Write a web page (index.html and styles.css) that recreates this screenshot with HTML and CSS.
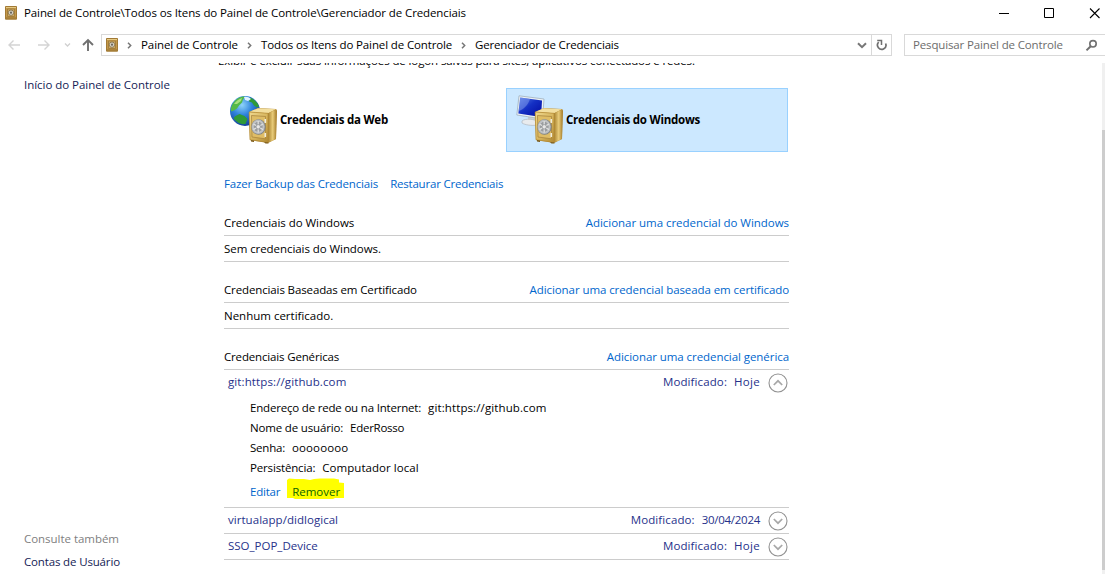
FILE: index.html
```
<!DOCTYPE html>
<html lang="pt-BR">
<head>
<meta charset="utf-8">
<title>Gerenciador de Credenciais</title>
<link rel="stylesheet" href="styles.css">
</head>
<body>
<svg class="defs" width="0" height="0">
  <defs>
    <linearGradient id="gold" x1="0" y1="0" x2="1" y2="1"><stop offset="0" stop-color="#efd88f"/><stop offset=".55" stop-color="#d6b45c"/><stop offset="1" stop-color="#b08a34"/></linearGradient>
    <linearGradient id="goldSide" x1="0" x2="1"><stop offset="0" stop-color="#a8822f"/><stop offset=".55" stop-color="#e9cc7a"/><stop offset="1" stop-color="#a57d2c"/></linearGradient>
    <radialGradient id="sea" cx=".4" cy=".3" r=".75"><stop offset="0" stop-color="#8fd4fa"/><stop offset=".45" stop-color="#2f83dc"/><stop offset="1" stop-color="#123a94"/></radialGradient>
    <radialGradient id="steel"><stop offset="0" stop-color="#f4f4f2"/><stop offset="1" stop-color="#b4b7ba"/></radialGradient>
    <linearGradient id="screen" x1="0" y1="0" x2="1" y2="1"><stop offset="0" stop-color="#5a7fe8"/><stop offset=".45" stop-color="#1430c4"/><stop offset="1" stop-color="#0209a0"/></linearGradient>
    <symbol id="vault" viewBox="0 0 30 37">
      <path d="M1 5 10 1 28 2 29 4 28 32 20 36 2 33Z" fill="#b48c38"/>
      <path d="M1.500 4.800 10 1.300 28 2.300 20 6.300Z" fill="#f3df9f"/>
      <path d="M20 6.200 28.600 2.600 28 32 20.500 35.600Z" fill="url(#goldSide)"/>
      <path d="M1.200 5 20 6.300 20 35.300 2 32.800Z" fill="url(#gold)" stroke="#b48b35" stroke-width=".7"/>
      <path d="M3.500 8.500 17.500 9.500V31.800L4 30Z" fill="#dfbd66" stroke="#a5803a" stroke-width=".7"/>
      <path d="M17.300 12v4M17.300 26v4" stroke="#f0ecdc" stroke-width="1.600"/>
      <ellipse cx="10.500" cy="20" rx="7.200" ry="7.800" fill="#7d8082"/>
      <ellipse cx="10.200" cy="19.800" rx="6.600" ry="7.200" fill="url(#steel)"/>
      <ellipse cx="10.200" cy="19.800" rx="4.500" ry="5.100" fill="#9a9da0"/>
      <path d="M10.200 14v11.600M5.400 17l9.600 5.600M5.400 22.600 15 17" stroke="#dfe0df" stroke-width="1.300"/>
      <circle cx="10.200" cy="19.800" r="2.200" fill="#e8e8e8" stroke="#85888b" stroke-width=".7"/>
      <path d="M3 33v1.500l3 .5v-1.600M16 35l1.500 1.600 3-.2v-1" fill="#785715"/>
    </symbol>
    <symbol id="safe" viewBox="0 0 12 14">
      <path d="M.5.500h11v12.700H.5Z" fill="#c3984a" stroke="#a27a35"/>
      <path d="M1 1h10v1H1Z" fill="#e5c983"/>
      <path d="M2.500 3h7v7.500h-7Z" fill="#ceaa61" stroke="#9b7637" stroke-width=".8"/>
      <circle cx="6" cy="6.700" r="2.700" fill="#d8d3c4" stroke="#806b43" stroke-width=".8"/>
      <circle cx="6" cy="6.700" r="1.100" fill="#68645a"/>
      <path d="M1 12h10" stroke="#94702e"/>
    </symbol>
    <symbol id="expander" viewBox="0 0 20 20">
      <circle cx="10" cy="10" r="9" fill="#fff" stroke="#929292" stroke-width="1.100"/>
      <path d="M5.800 8 10 12.200 14.200 8" fill="none" stroke="#a8a8a8" stroke-width="1.700"/>
    </symbol>
  </defs>
</svg>
<div class="window">
  <header class="titlebar">
    <svg class="safe"><use href="#safe"/></svg>
    <span class="title ls-10">Painel de Controle\Todos os Itens do Painel de Controle\Gerenciador de Credenciais</span>
    <svg class="controls" viewBox="0 0 110 24"><path d="M4 12.500h10" stroke="#000"/><path d="M49.500 7.500h9v9h-9Z" fill="none" stroke="#000"/><path d="m95 7.500 9.500 9.500m0-9.500L95 17" stroke="#000" stroke-width="1.100"/></svg>
  </header>
  <nav class="navbar">
    <svg class="arrows" viewBox="0 0 101 22" fill="none">
      <path d="M20 11H9m4.500-4.500L9 11l4.500 4.500" stroke="#d4d4d4" stroke-width="1.400"/>
      <path d="M38 11h11m-4.500-4.500L49 11l-4.500 4.500" stroke="#d4d4d4" stroke-width="1.400"/>
      <path d="m65 9.500 2.500 2.500L70 9.500" stroke="#d0d0d0" stroke-width="1.300"/>
      <path d="M88 17V6m-5 5 5-5 5 5" stroke="#707070" stroke-width="1.900"/>
    </svg>
    <div class="address">
      <svg class="safe"><use href="#safe"/></svg>
      <svg class="sep" viewBox="0 0 5 7"><path d="m1 .8 2.700 2.700L1 6.200"/></svg>
      <span class="crumb crumb-root ls-8">Painel de Controle</span>
      <svg class="sep" viewBox="0 0 5 7"><path d="m1 .8 2.700 2.700L1 6.200"/></svg>
      <span class="crumb crumb-all ls-13">Todos os Itens do Painel de Controle</span>
      <svg class="sep" viewBox="0 0 5 7"><path d="m1 .8 2.700 2.700L1 6.200"/></svg>
      <span class="crumb ls-16">Gerenciador de Credenciais</span>
      <svg class="drop" viewBox="0 0 10 7"><path d="m1 1.200 4 4 4-4" fill="none" stroke="#777" stroke-width="2"/></svg>
      <div class="refresh"><svg viewBox="0 0 12 12" width="12" height="12"><path d="M2.700 3.200A4.200 4.200 0 1 0 9.600 4.500" fill="none" stroke="#707070" stroke-width="1.700"/><path d="M1.200 1.500H5.500V6" fill="none" stroke="#707070" stroke-width="1.500"/></svg></div>
    </div>
    <div class="search"><span class="ls-14">Pesquisar Painel de Controle</span>
      <svg viewBox="0 0 13 13"><circle cx="8" cy="4.800" r="3.200" fill="none" stroke="#707070" stroke-width="1.600"/><path d="M5.700 7.200 1.500 11.400" stroke="#707070" stroke-width="2"/></svg>
    </div>
  </nav>
  <div class="body">
    <aside class="sidebar">
      <a class="home ls-3">Início do Painel de Controle</a>
      <span class="see-also ls-3">Consulte também</span>
      <a class="ls-15">Contas de Usuário</a>
    </aside>
    <main class="main">
      <p class="intro ls-11">Exibir e excluir suas informações de logon salvas para sites, aplicativos conectados e redes.</p>
      <div class="tiles">
        <div class="tile">
          <svg class="tile-icon" viewBox="0 0 50 50">
            <circle cx="15" cy="16" r="15" fill="url(#sea)"/>
            <path d="M2 10C5 4 10 1.500 15 1.500l-2 3-1 3-3 3-2 3-3 2-3 1C.8 14 1 12 2 10Z" fill="#54b948"/>
            <path d="M20 2.500c4 1.500 7.500 5 9 9l-2 1-3-2-2-3-3-1ZM5.500 21l4-2 5 2 3 3-2 5C10 30 5 26 3.500 23Z" fill="#2f9a38"/>
            <path d="M4 9c2-3 5-5 8-6l-1 3-4 3Z" fill="#a8e07d"/>
            <path d="M14 2c3-.5 5 .500 7 2l-3 2-3-1Z" fill="#dff3ff"/>
            <use href="#vault" x="18" y="12" width="30" height="37"/>
          </svg>
          <b class="ls-22">Credenciais da Web</b>
        </div>
        <div class="tile selected">
          <svg class="tile-icon" viewBox="0 0 50 50">
            <path d="m12 20 7 1 1 8-8-1Z" fill="#c9cfd4"/>
            <path d="M6 26c3-3 13-2 17 1l-2 3c-5 1-12 0-15-2Z" fill="#e8ebee" stroke="#b5bdc4" stroke-width=".8"/>
            <path d="M3 .8 28 4 26.500 24 .8 20Z" fill="#edf2f5" stroke="#9fb0be" stroke-width=".8"/>
            <path d="M4.200 2.500 26 5.500 25 22 2.300 18.600Z" fill="url(#screen)"/>
            <path d="M4.200 2.500 14 4C12 10 8 14 2.700 16Z" fill="#829eee" opacity=".5"/>
            <use href="#vault" x="18" y="12" width="30" height="37"/>
          </svg>
          <b class="ls-23">Credenciais do Windows</b>
        </div>
      </div>
      <div class="actions"><a class="ls-15">Fazer Backup das Credenciais</a><a class="ls-21">Restaurar Credenciais</a></div>

      <section class="group">
        <div class="head"><span class="ls-3">Credenciais do Windows</span><a class="ls-3">Adicionar uma credencial do Windows</a></div>
        <div class="empty ls-6">Sem credenciais do Windows.</div>
      </section>
      <section class="group">
        <div class="head"><span class="ls-13">Credenciais Baseadas em Certificado</span><a class="ls-8">Adicionar uma credencial baseada em certificado</a></div>
        <div class="empty">Nenhum certificado.</div>
      </section>
      <section class="group">
        <div class="head"><span class="ls-16">Credenciais Genéricas</span><a class="ls-6">Adicionar uma credencial genérica</a></div>
        <div class="item open">
          <div class="item-head"><span class="wide">git:https://github.com</span><span class="modified wide">Modificado:</span><span class="when wider">Hoje</span><svg class="expander up"><use href="#expander"/></svg></div>
          <div class="details">
            <div><span class="ls-19">Endereço de rede ou na Internet:</span><span class="wide">git:https://github.com</span></div>
            <div><span class="ls-16">Nome de usuário:</span><span class="ls-28">EderRosso</span></div>
            <div><span class="ls-21">Senha:</span><span class="wide">oooooooo</span></div>
            <div><span class="ls-16">Persistência:</span><span class="local">Computador local</span></div>
          </div>
          <div class="links"><a class="ls-23">Editar</a><a class="remove"><svg class="marker" viewBox="0 0 57 22"><path d="M0 2 2 .500 8 1h9l6 1 4-1 6-.5h14l5 1v3l5 .500V20h-9l-2 1H8l-2-1H0Z"/></svg><span>Remover</span></a></div>
        </div>
        <div class="item"><div class="item-head"><span class="local">virtualapp/didlogical</span><span class="modified wide">Modificado:</span><span class="when ls-28">30/04/2024</span><svg class="expander"><use href="#expander"/></svg></div></div>
        <div class="item"><div class="item-head"><span>SSO_POP_Device</span><span class="modified wide">Modificado:</span><span class="when wider">Hoje</span><svg class="expander"><use href="#expander"/></svg></div></div>
      </section>
    </main>
    <div class="scrollbar"><div class="thumb"></div></div>
  </div>
</div>
</body>
</html>
```
FILE: styles.css
```
* { box-sizing: border-box; }
body {
  margin: 0;
  background: #fff;
  color: #000;
  font: 11.5px/16px "Open Sans", "Noto Sans", sans-serif;
}
svg { display: block; flex: none; }
.defs { position: absolute; }
.window { display: flex; flex-direction: column; width: 1105px; height: 574px; overflow: hidden; white-space: nowrap; }

/* letter fitting, in hundredths of a pixel */
.ls-3 { letter-spacing: -.035px; }
.ls-6 { letter-spacing: -.065px; }
.ls-8 { letter-spacing: -.08px; }
.ls-10 { letter-spacing: -.105px; }
.ls-11 { letter-spacing: -.11px; }
.ls-13 { letter-spacing: -.125px; }
.ls-14 { letter-spacing: -.14px; }
.ls-15 { letter-spacing: -.15px; }
.ls-16 { letter-spacing: -.16px; }
.ls-19 { letter-spacing: -.19px; }
.ls-21 { letter-spacing: -.21px; }
.ls-22 { letter-spacing: -.22px; }
.ls-23 { letter-spacing: -.23px; }
.ls-28 { letter-spacing: -.28px; }
.local { letter-spacing: .04px; }
.wide { letter-spacing: .11px; }
.wider { letter-spacing: .3px; }

.titlebar { display: flex; align-items: center; height: 25px; padding-left: 5px; flex: none; }
.safe { width: 12px; height: 14px; }
.title { margin-left: 7px; }
.controls { width: 110px; height: 24px; margin-left: auto; }

.navbar { display: flex; height: 38px; padding-top: 9px; flex: none; }
.arrows { width: 101px; height: 22px; }
.address { display: flex; align-items: center; width: 791px; height: 22px; padding-left: 4px; border: 1px solid #d9d9d9; }
.sep { width: 5px; height: 7px; margin: 0 9px; }
.sep path { fill: none; stroke: #777; stroke-width: 1.5; }
.crumb-root { width: 97px; }
.crumb-all { width: 191px; }
.drop { width: 10px; height: 7px; margin-left: auto; margin-right: 4px; }
.refresh { display: flex; align-items: center; justify-content: center; width: 20px; height: 20px; border-left: 1px solid #d9d9d9; }
.search { display: flex; align-items: center; justify-content: space-between; width: 201px; height: 22px; margin-left: 12px; padding: 0 7px 0 8px; border: 1px solid #d9d9d9; border-right: 0; color: #6d6d6d; }
.search svg { width: 13px; height: 13px; }

.body { display: flex; flex: 1; min-height: 0; overflow: hidden; }
.sidebar { display: flex; flex-direction: column; width: 218px; padding: 14px 0 4px 24px; }
.see-also { margin: auto 0 7px; color: #808080; }

.main { width: 571px; }
.intro { margin: -10px 0 19px; }
.tiles { display: flex; gap: 4px; padding-left: 2px; height: 64px; }
.tile { display: flex; align-items: center; width: 282px; padding-left: 9px; border: 1px solid transparent; }
.tile.selected { background: #cce8ff; border-color: #99d1ff; }
.tile-icon { width: 50px; height: 50px; }
.tile b { font-weight: 700; }

a { color: #0066cc; }
.sidebar a { color: #151c55; }
.actions { display: flex; gap: 12px; margin: 24px 0 0 6px; }
.group { margin-left: 6px; padding-top: 23px; }
.group + .group { padding-top: 20px; }
.head { display: flex; justify-content: space-between; height: 21px; border-bottom: 1px solid #ccc; }
.empty { height: 26px; padding-top: 5px; border-bottom: 1px solid #ccc; }
.item { height: 26px; border-bottom: 1px solid #ccc; }
.item.open { height: 138px; }
.item-head { display: flex; align-items: flex-start; height: 25px; padding: 4px 1px 0 4px; color: #26318a; }
.modified { margin-left: auto; }
.when { margin-left: 7px; }
.expander { width: 20px; height: 20px; margin: -1.5px 0 0 8px; }
.up { transform: rotate(180deg); }
.details { padding: 3px 0 0 26px; }
.details div { display: flex; gap: 7px; height: 20px; line-height: 20px; }
.links { display: flex; gap: 12px; padding: 6px 0 0 26px; }
.remove { position: relative; color: #0c6400; }
.remove span { position: relative; }
.marker { position: absolute; left: -5px; top: -6px; width: 57px; height: 22px; fill: #ff0; }

.scrollbar { width: 3px; margin-left: auto; padding-top: 67px; background: #f0f0f0; }
.thumb { height: 440px; background: #cdcdcd; }
```
